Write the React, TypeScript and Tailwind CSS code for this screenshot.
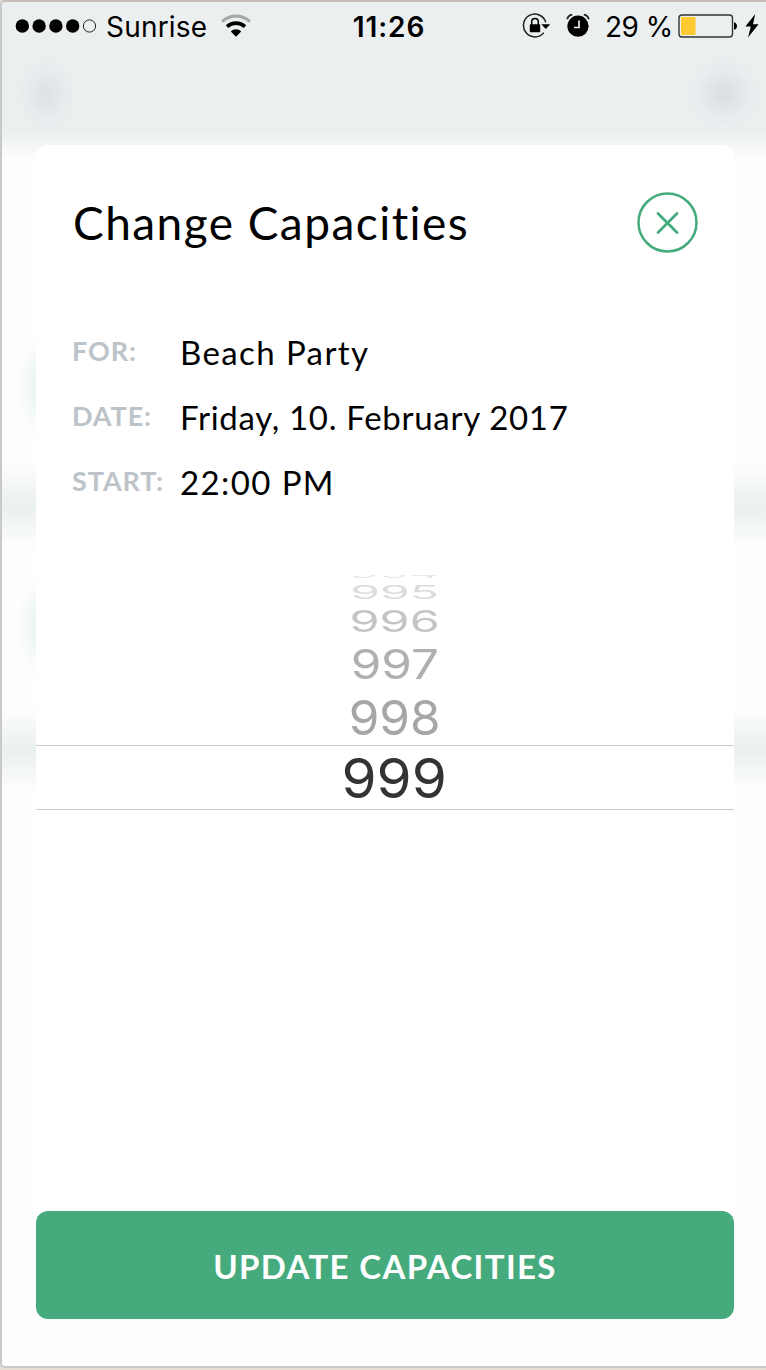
// App.tsx
import React from "react";

const details = [
  { label: "FOR:", value: "Beach Party", spacing: "tracking-[1.4px]" },
  { label: "DATE:", value: "Friday, 10. February 2017", spacing: "tracking-[0.7px]" },
  { label: "START:", value: "22:00 PM", spacing: "tracking-[1.4px]" },
];

const numbers = [
  { value: "995", row: "h-[22px]", text: "text-[#dcdcdc] scale-y-[0.39]" },
  { value: "996", row: "h-[38px]", text: "text-[#c4c4c4] scale-y-[0.61] scale-x-[1.01]" },
  { value: "997", row: "h-12", text: "text-[#b0b0b0] scale-y-[0.84] scale-x-[1.03]" },
  { value: "998", row: "h-[56px] pt-0.5", text: "text-[#a6a6a6] scale-x-[1.03]" },
];

const StatusBar = () => {
  return (
    <div className="flex h-12 items-center pl-[13px] pr-[7px] font-[Inter,sans-serif] text-[28px] text-black">
      {/* Signal and carrier */}
      <div className="flex flex-1 items-center">
        <svg width="84" height="16" viewBox="0 0 84 16">
          <circle cx="7.3" cy="8" r="6.7" />
          <circle cx="24.1" cy="8" r="6.7" />
          <circle cx="40.9" cy="8" r="6.7" />
          <circle cx="57.7" cy="8" r="6.7" />
          <circle cx="74.5" cy="8" r="6.1" fill="none" stroke="#222" strokeWidth="1" />
        </svg>
        <span className="ml-[7px] w-[103px] pt-0.5 tracking-[0.2px]">Sunrise</span>
        <svg className="ml-[12px]" width="30" height="24" viewBox="0 0 30 24">
          <path d="M1.2 7.6C9 .2 21 .2 28.8 7.6" fill="none" stroke="#a8abac" strokeWidth="3.2" />
          <path d="M6 12.6c5-4.6 13-4.6 18 0" fill="none" stroke="#000" strokeWidth="3.6" />
          <path d="M9.8 17.6c2.9-3.1 7.5-3.1 10.4 0L15 22.8z" />
        </svg>
      </div>

      <div className="pl-1 pt-0.5 font-semibold tracking-[0.9px]">11:26</div>

      {/* Battery side */}
      <div className="flex flex-1 items-center justify-end">
        <svg width="30" height="26" viewBox="0 0 30 26">
          <path d="M23.8 9.2A11.4 11.4 0 1 0 21.8 19.6" fill="none" stroke="#222" strokeWidth="1.5" />
          <path d="M19.4 11.3h8.8l-4.4 4.8z" />
          <rect x="7.8" y="11.2" width="10.4" height="8" rx="0.8" />
          <path d="M9.7 12V8.8a3.3 3.3 0 0 1 6.6 0V12" fill="none" stroke="#000" strokeWidth="1.5" />
        </svg>
        <svg className="ml-3.5" width="24" height="26" viewBox="0 0 24 26">
          <circle cx="12" cy="13.2" r="10.6" />
          <path d="M1.2 6.2C1.8 3.6 3.6 2 6.2 1.6M22.8 6.2C22.2 3.6 20.4 2 17.8 1.6" fill="none" stroke="#222" strokeWidth="1.8" />
          <path d="M13 7.5v7H8" fill="none" stroke="#ebeff0" strokeWidth="1.7" />
        </svg>
        <span className="ml-[15px] w-[67px] whitespace-nowrap pt-0.5 tracking-[-0.5px]">29 %</span>
        <svg className="ml-[6px]" width="60" height="26" viewBox="0 0 60 26">
          <rect x="1" y="2" width="53.5" height="22" rx="3" fill="none" stroke="#333" strokeWidth="1.4" />
          <rect x="3" y="4" width="14.5" height="18" rx="0.8" fill="#fdca2f" />
          <path d="M56 9.2c4 1 4 6.6 0 7.6z" />
        </svg>
        <svg className="ml-[7px]" width="14" height="24" viewBox="0 0 14 24">
          <path d="M10.2 0L.4 12.4h5.4L3 23.6 13.6 10.2H8z" />
        </svg>
      </div>
    </div>
  );
};

const Backdrop = () => {
  return (
    <div className="absolute inset-0 overflow-hidden bg-[#fefefe]">
      <div className="h-[456px] bg-linear-to-b from-[#ebeff0] from-[28%] to-[#fefefe] to-[35%]" />
      <div className="h-[97px] bg-linear-to-b from-[#fefefe] from-5% via-[#eaeff0] to-[#fefefe] to-95%" />
      <div className="h-[147px]" />
      <div className="h-[94px] bg-linear-to-b from-[#fefefe] from-5% via-[#eaeff0] to-[#fefefe] to-95%" />
      <div className="absolute left-[34px] top-[74px] h-[36px] w-[22px] rounded-full bg-[#c8ced2]/55 blur-[10px]" />
      <div className="absolute left-[704px] top-[74px] h-[34px] w-9 rounded-full bg-[#c3cacf]/50 blur-[10px]" />
      <div className="absolute left-[28px] top-[345px] h-20 w-16 rounded-full bg-[#45ab7c]/15 blur-[10px]" />
      <div className="absolute left-[28px] top-[584px] h-20 w-16 rounded-full bg-[#45ab7c]/15 blur-[10px]" />
    </div>
  );
};

const App = () => {
  return (
    <div className="h-[1370px] w-[766px] overflow-hidden border-b-2 border-[#e6ddd4] bg-[#e6ddd4]">
      <div className="relative h-[1368px] overflow-hidden rounded-l-[5px] border-b-2 border-l-2 border-t-2 border-b-[#c9c9cb] border-l-[#c9c9cb] border-t-[#c8bdb6]">
        <Backdrop />
        <div className="relative">
          <StatusBar />

          {/* Modal */}
          <div className="ml-[34px] mt-[95px] flex h-[1066px] w-[698px] flex-col rounded-t-xl bg-white font-[Lato,sans-serif] text-black">
            <div className="flex h-[155px] items-center justify-between pl-[37px] pr-9">
              <h1 className="whitespace-nowrap text-[46px] tracking-[1.45px]">Change Capacities</h1>
              <button aria-label="Close">
                <svg width="61" height="61" viewBox="0 0 61 61" fill="none" stroke="#45ab7c">
                  <circle cx="30.5" cy="30.5" r="29" strokeWidth="2.5" />
                  <path d="M21 21.5l19 19M40 21.5l-19 19" strokeWidth="2.8" strokeLinecap="round" />
                </svg>
              </button>
            </div>

            <div className="mt-5 pl-9">
              {details.map((item) => (
                <div key={item.label} className="flex h-[65px] items-center">
                  <span className="w-[108px] pb-0.5 text-[27px] font-bold tracking-[0.9px] text-[#bdc4c9]">{item.label}</span>
                  <span className={`whitespace-nowrap text-[33px] ${item.spacing}`}>{item.value}</span>
                </div>
              ))}
            </div>

            {/* Picker */}
            <div className="mt-[60px] pl-[19px] font-[Inter,sans-serif] text-5xl leading-none">
              <div className="flex h-[5px] items-center justify-center overflow-hidden">
                <span className="-mt-1.5 scale-y-[0.2] text-[#e6e6e6]">994</span>
              </div>
              <div className="pt-px">
                {numbers.map((item) => (
                  <div key={item.value} className={`flex items-center justify-center ${item.row}`}>
                    <span className={item.text}>{item.value}</span>
                  </div>
                ))}
              </div>
            </div>
            <div className="flex h-[65px] items-center justify-center border-y border-[#cacaca] pl-[19px] pt-px font-[Inter,sans-serif] text-[55px] leading-none text-[#333]">
              <span className="scale-x-[1.03]">999</span>
            </div>
          </div>
        </div>

        <div className="relative ml-[34px]">
          <button className="flex h-[108px] w-[698px] items-center justify-center rounded-xl bg-[#45ab7c] pt-[3px] font-[Lato,sans-serif] text-[33px] font-bold tracking-[1.35px] text-white">
            UPDATE CAPACITIES
          </button>
        </div>
      </div>
    </div>
  );
};

export default App;
